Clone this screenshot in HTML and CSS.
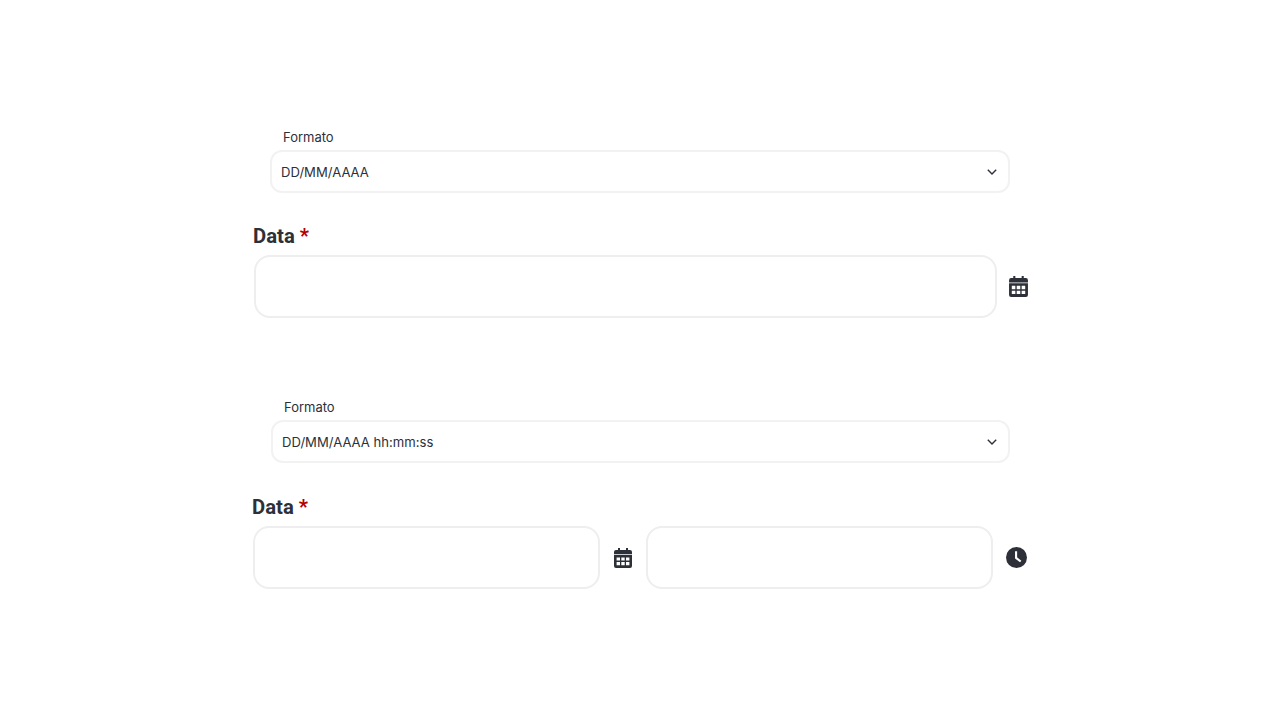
FILE: index.html
```html
<!DOCTYPE html>
<html>

<head>
	<meta charset="UTF-8">
	<meta name="viewport" content="width=device-width, initial-scale=1.0">
	<title>Data</title>
	<link rel="stylesheet" href="styles.css">
</head>

<body>
	<div class="container">
		<section class="field-block">
			<div class="format">
				<label class="format-label">Formato</label>
				<div class="select">
					<span>DD/MM/AAAA</span>
					<svg class="chevron" viewBox="0 0 10 6"><path d="M.8.8 5 5 9.2.8" /></svg>
				</div>
			</div>
			<div class="data-label">Data <span class="required">*</span></div>
			<div class="input-row">
				<div class="input input-full"></div>
				<svg class="icon icon-calendar icon-calendar-lg" viewBox="0 0 18 20">
					<path d="M4 0h2v2.5H4zM12 0h2v2.5h-2z" />
					<path fill-rule="evenodd" d="M2 2h14a2 2 0 0 1 2 2v2.2H0V4a2 2 0 0 1 2-2zM0 7h18v11a2 2 0 0 1-2 2H2a2 2 0 0 1-2-2zM2.6 9.4v3.2h3.4V9.4zm4.7 0v3.2h3.4V9.4zm4.7 0v3.2h3.4V9.4zM2.6 14v3.2h3.4V14zm4.7 0v3.2h3.4V14zm4.7 0v3.2h3.4V14z" />
				</svg>
			</div>
		</section>

		<section class="field-block second">
			<div class="format">
				<label class="format-label">Formato</label>
				<div class="select">
					<span>DD/MM/AAAA hh:mm:ss</span>
					<svg class="chevron" viewBox="0 0 10 6"><path d="M.8.8 5 5 9.2.8" /></svg>
				</div>
			</div>
			<div class="data-label">Data <span class="required">*</span></div>
			<div class="input-row">
				<div class="input"></div>
				<svg class="icon icon-calendar" viewBox="0 0 18 20">
					<path d="M4 0h2v2.5H4zM12 0h2v2.5h-2z" />
					<path fill-rule="evenodd" d="M2 2h14a2 2 0 0 1 2 2v2.2H0V4a2 2 0 0 1 2-2zM0 7h18v11a2 2 0 0 1-2 2H2a2 2 0 0 1-2-2zM2.6 9.4v3.2h3.4V9.4zm4.7 0v3.2h3.4V9.4zm4.7 0v3.2h3.4V9.4zM2.6 14v3.2h3.4V14zm4.7 0v3.2h3.4V14zm4.7 0v3.2h3.4V14z" />
				</svg>
				<div class="input"></div>
				<svg class="icon icon-clock" viewBox="0 0 20 20">
					<circle cx="10" cy="10" r="10" />
					<path class="clock-hand" d="M9.6 4V10.4l4.4 3.4" />
				</svg>
			</div>
		</section>
	</div>
</body>

</html>
```

FILE: styles.css
```css
* {
	margin: 0;
	padding: 0;
	box-sizing: border-box;
}

body {
	background-color: #fff;
	color: #2d3039;
	font-family: Roboto, "Liberation Sans", sans-serif;
}

.container {
	width: 780px;
	margin-left: 253px;
	padding-top: 128px;
}

.field-block.second {
	margin-top: 80px;
}

.format {
	width: 740px;
	margin-left: 17px;
}

.second .format {
	width: 739px;
	margin-left: 18px;
}

.format-label {
	display: block;
	height: 22px;
	padding-left: 13px;
	font-family: Inter, sans-serif;
	font-size: 13px;
	line-height: 18px;
}

.select {
	display: flex;
	align-items: center;
	justify-content: space-between;
	height: 43px;
	padding: 0 11px 0 9px;
	border: 2px solid #f2f2f3;
	border-radius: 12px;
	font-family: Inter, sans-serif;
	font-size: 13.1px;
}

.chevron {
	width: 10px;
	height: 6px;
	fill: none;
	stroke: #2d3039;
	stroke-width: 1.4;
}

.data-label {
	margin-top: 30px;
	height: 32px;
	font-size: 20.3px;
	font-weight: 700;
	line-height: 26px;
}

.second .data-label {
	margin-top: 31px;
	margin-left: -1px;
}

.required {
	color: #b50000;
}

.input-row {
	display: flex;
	align-items: center;
}

.input {
	flex-shrink: 0;
	width: 347px;
	height: 63px;
	border: 2px solid #eeeeef;
	border-radius: 16px;
}

.input-full {
	width: 743px;
	margin-left: 1px;
}

.icon {
	flex-shrink: 0;
	fill: #2d3039;
}

.icon-calendar {
	width: 18px;
	height: 20px;
	margin: 0 14px;
}

.icon-calendar-lg {
	width: 19px;
	height: 21px;
	margin: 0 0 0 12px;
}

.icon-clock {
	width: 21px;
	height: 21px;
	margin-left: 13px;
}

.clock-hand {
	fill: none;
	stroke: #fff;
	stroke-width: 2;
}
```
